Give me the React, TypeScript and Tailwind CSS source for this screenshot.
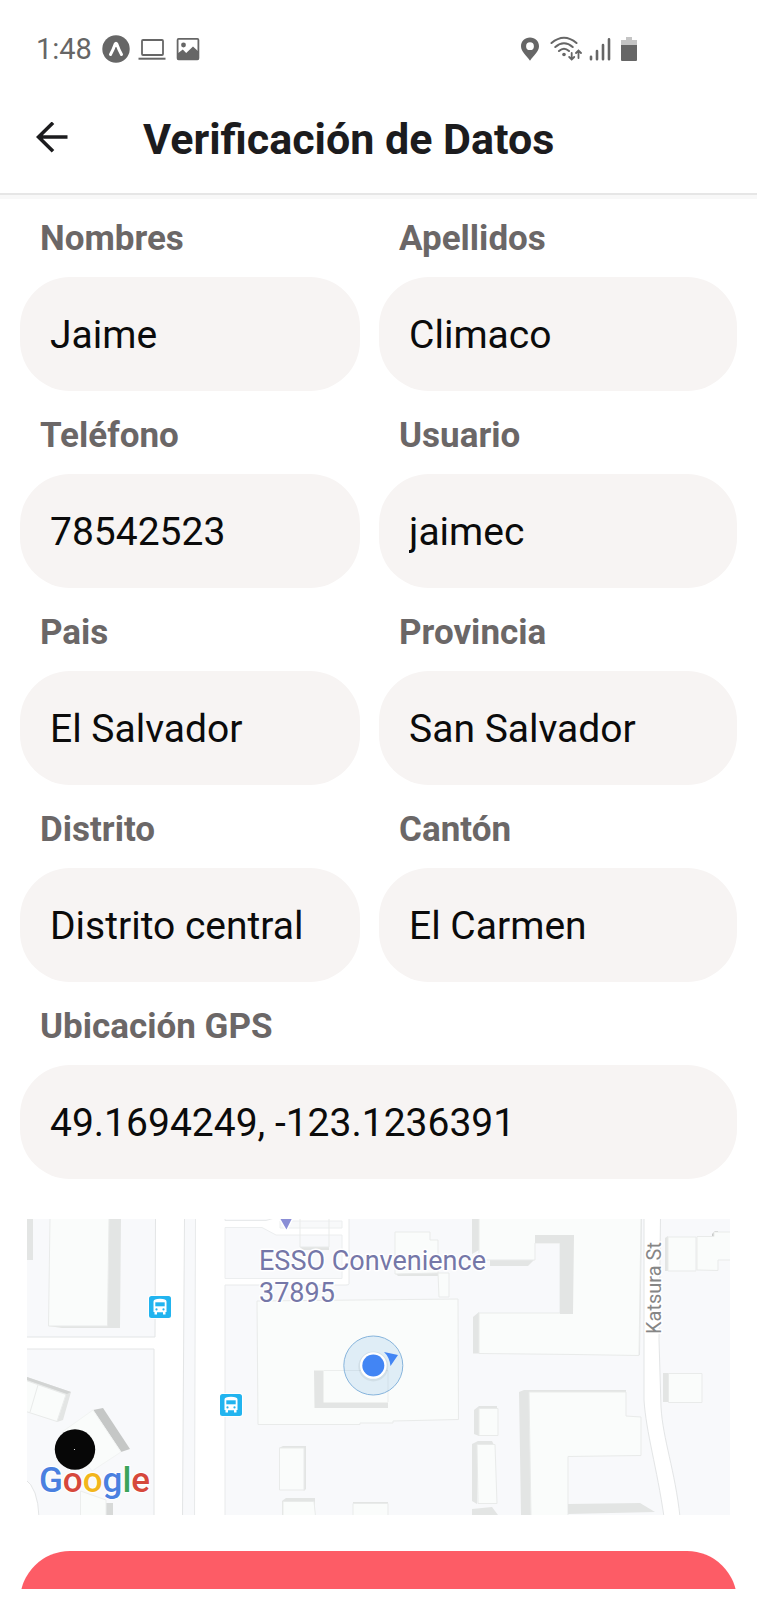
import React from "react";

type FieldProps = {
  id: string;
  label: string;
  value: string;
  wide?: boolean;
};

function Field({ id, label, value, wide }: FieldProps) {
  return (
    <div className={wide ? "col-span-2 min-w-0" : "min-w-0"}>
      <label htmlFor={id} className="mb-4 block pl-5 text-[35px] leading-[44px] font-bold text-[#6b6767]">
        {label}
      </label>
      <input
        id={id}
        type="text"
        defaultValue={value}
        className="block h-[114px] w-full rounded-[50px] bg-[#f7f4f3] px-[30px] pt-0.5 text-[39px] text-[#0b0b0b] outline-none"
      />
    </div>
  );
}

function StatusBar() {
  return (
    <div className="flex h-24 items-center justify-between pt-0.5 pr-[120px] pl-9 text-[#666666]">
      <div className="flex items-center">
        <span className="mr-2.5 text-[29px] leading-9">1:48</span>
        <svg className="mr-2" width="28" height="28" viewBox="0 0 28 28" aria-hidden="true">
          <circle cx="14" cy="14" r="13.7" fill="currentColor" />
          <path d="M8.5 19.5 Q11.5 14 13.2 9 Q14 7.4 14.8 9 Q16.5 14 19.5 19.5" fill="none" stroke="#fff" strokeWidth="3" strokeLinecap="round" strokeLinejoin="round" />
        </svg>
        <svg className="mr-2.5" width="28" height="28" viewBox="0 0 28 28" fill="none" stroke="currentColor" aria-hidden="true">
          <rect x="4" y="5" width="21" height="15" rx="1" strokeWidth="1.8" />
          <path d="M0.5 23.7 H27.5" strokeWidth="2" />
        </svg>
        <svg width="24" height="24" viewBox="0 0 24 24" aria-hidden="true">
          <rect x="1.6" y="1.9" width="20.8" height="20.4" rx="1" fill="none" stroke="currentColor" strokeWidth="1.8" />
          <circle cx="7.5" cy="8" r="2.4" fill="currentColor" />
          <path d="M1.6 16.5 L6.8 12.5 L10.2 16 L17 9.5 L22.4 14.5 V22.5 H1.6 Z" fill="currentColor" />
        </svg>
      </div>
      <div className="flex items-center">
        <svg className="mr-2.5" width="20" height="24" viewBox="0 0 20 24" aria-hidden="true">
          <path fillRule="evenodd" d="M10 0.5 C15.2 0.5 19 4.4 19 9.3 C19 14.5 13.6 18.6 10 23.8 C6.4 18.6 1 14.5 1 9.3 C1 4.4 4.8 0.5 10 0.5 Z M10 5.3 A3.9 3.9 0 1 0 10 13.1 A3.9 3.9 0 1 0 10 5.3 Z" fill="currentColor" />
        </svg>
        <svg className="mr-[7px]" width="32" height="26" viewBox="0 0 32 26" fill="none" stroke="currentColor" strokeLinecap="round" aria-hidden="true">
          <g strokeWidth="2.1">
            <path d="M1.5 7 Q14 -3.5 26.5 7" />
            <path d="M5.3 11 Q14 3.5 22.7 11" />
            <path d="M9 15 Q14 10.5 19 15" />
          </g>
          <circle cx="14" cy="18.5" r="1.8" fill="currentColor" stroke="none" />
          <path d="M21.7 17 V23 M19.2 21 L21.7 23.5 L24.2 21 M28.5 22 V15.500 M26 17 L28.5 14.500 L31 17" strokeWidth="1.8" />
        </svg>
        <svg className="mr-2.5" width="22" height="24" viewBox="0 0 22 24" fill="none" stroke="currentColor" strokeWidth="2.6" strokeLinecap="round" aria-hidden="true">
          <path d="M2 19.8 V22.2 M8 14 V22.2 M14 8 V22.2 M20 2.4 V22.2" />
        </svg>
        <svg width="16" height="24" viewBox="0 0 16 24" aria-hidden="true">
          <path d="M5 0 H11 V3 H16 V8.5 H0 V3 H5 Z" fill="#c4c4c4" />
          <path d="M0 8 H16 V23 Q16 24 15 24 H1 Q0 24 0 23 Z" fill="currentColor" />
        </svg>
      </div>
    </div>
  );
}

function BusStop({ x, y }: { x: number; y: number }) {
  return (
    <g transform={`translate(${x} ${y})`}>
      <rect x="-1" y="-1" width="24" height="24" rx="3.5" fill="#fff" />
      <rect width="22" height="22" rx="2.5" fill="#22b4ef" />
      <path d="M4.5 5.5 Q4.5 2.8 11 2.8 Q17.5 2.8 17.5 5.5 V16 H16.5 V18.5 H14 V16.2 H8 V18.5 H5.5 V16 H4.5 Z" fill="#fff" />
      <rect x="6.3" y="6.3" width="9.4" height="4" fill="#22b4ef" />
      <circle cx="7.5" cy="13.4" r="1.1" fill="#22b4ef" />
      <circle cx="14.5" cy="13.4" r="1.1" fill="#22b4ef" />
    </g>
  );
}

function LocationMap() {
  return (
    <svg className="block h-auto w-full" viewBox="27 19 703 296" role="img" aria-label="Mapa de ubicación">
      <rect x="27" y="19" width="703" height="296" fill="#f8f9fb" />

      {/* Streets */}
      <g fill="#ffffff" stroke="#e3e5e6" strokeWidth="1">
        <path d="M155.5 17 H184.5 L182.5 317 H154 V149 H25 V137 H155 Z" />
        <path d="M195.5 17 H225 V20.5 H266 L278 17 H349 V84 Q349 85 346 85 H225 V317 H194.5 Z" stroke="#e8eaeb" />
        <path d="M641.5 17 L639.5 155" fill="none" />
        <path d="M644 17 V200 C646 232 657 268 664 317 H680 C675 270 663 240 661 207 L659 140 L660.5 17 Z" />
        <path d="M25 279 Q38 288 39 317 H25 Z" />
      </g>
      <path d="M225 27.5 H262 L276 35 H342 V78.5 H225 Z" fill="#f8f9fb" stroke="#eceeef" />
      <path d="M280 21 H342 V28 H280 Z" fill="#f8f9fa" stroke="#eceeef" />

      {/* Building shadows */}
      <g fill="#e3e5e4">
        <path d="M27 19 H33 V60 H27 Z" />
        <path d="M109 19 H121 L120 128 H62 L48 126 H107 Z" />
        <path d="M27 177 L71 192 L63 220 L57 222 L66 195 L27 181 Z" />
        <path d="M27 177 L71 192 L67 194 L27 180 Z" fill="#d2d4d3" />
        <path d="M93 210 L103 208 L130 249 L121 252 Z" fill="#c5c7c6" />
        <path d="M106 303 H113 V315 H106 Z" fill="#d7d9d8" />
        <path d="M300 47 H329 V50 H303 Z" />
        <path d="M395 73 H438 V76 H398 Z" />
        <path d="M472 19 H479 V50 L472 54 Z" />
        <path d="M490 60 H534 L528 66 H490 Z" />
        <path d="M473 117 L479 112 V153.5 H473 Z" />
        <path d="M519 192 L524 190 H626 V193 H529 L531 315 H521 Z" />
        <path d="M474 210 L479 206 H497 V209 H479 V236 L474 234 Z" />
        <path d="M472 244 L478 241 H492 L494 245 H477 V304 L472 301 Z" />
        <path d="M472 309 L492 307 L498 315 H472 Z" />
        <path d="M279 248 L283 246 H306 V289 L304 291 Z" />
        <path d="M282 301 L286 298 H315 V315 H282 Z" />
        <path d="M353 302 H388 V305 H353 Z" />
        <path d="M665 38 L668 36 V71 H665 Z" />
        <path d="M712 34 L715 31 H718 V36 H712 Z" fill="#c9cbca" />
        <path d="M663 173 H669 V202 H663 Z" />
      </g>

      {/* Buildings */}
      <g fill="#fafcfb" stroke="#e9ebea" strokeWidth="1">
        <path d="M50 18 H109 L107.5 126 H48.5 Z" />
        <path d="M26 180.5 L66 194.5 L57 221.5 L26 211.5 M38 185 L30 212" />
        <path d="M93 210 L121 252 L92 271 L62 232 Z" stroke="#f2f4f3" />
        <path d="M80.5 316 V291 L106 300 V316" stroke="#eceeed" />
        <path d="M300 18 H329 V47 H300 Z" fill="none" />
        <path d="M257 101 L458 99 L458.5 219.5 L393 221 V223 H360 V224.5 H258 Z" />
        <path d="M395 74 V32 H430 V40 H438 V73 Z M438 73 H449 V97 H439 Z" />
        <path d="M479 18 H641 L639 155.5 L575 154.5 L479 153.5 V113 H560 V43 H535 V60 H479 Z" />
        <path d="M529 192 H626 V216 L641 217 V255.5 L568 256.5 V316 H531 Z" />
        <path d="M479 208.5 H498 V235.5 H479 Z M477 244.5 H495 L497 303.5 H478 Z" />
        <path d="M279.5 248 H304 V290 H279.5 Z M283 316 V301.5 H314 L315.5 316 M353 316 V303.5 H388 V316" />
        <path d="M668 37 H696 V71 H668 Z M697 70 V36.5 H714 V32 H731 V60 H718 V70.5 Z" />
        <path d="M668.5 173.5 H702 V202.5 H668.5 Z" />
      </g>
      <path d="M535 35 H574 L573 114 H560 V43 H535 Z" fill="#e3e5e4" />
      <path d="M568 304 L640 303 L655 312 L568 314 Z" fill="#e3e5e4" />
      <path d="M314 170.5 H323.5 V202.5 H388 V208 H314.5 Z" fill="#e3e5e4" />
      <path d="M323.5 170.5 H388 V202" fill="none" stroke="#eceeed" />

      {/* Places */}
      <path d="M279 18 L293 18 L286.5 31 Z" fill="#8a8ed6" stroke="#fff" strokeWidth="1.5" />
      <BusStop x={149} y={96} />
      <BusStop x={220} y={194} />
      <g fontFamily="Roboto, sans-serif" stroke="#fff" strokeWidth="3" strokeLinejoin="round" paintOrder="stroke">
        <text x="259" y="70" fontSize="27" fill="#7577a8">ESSO Convenience</text>
        <text x="259" y="102" fontSize="27" fill="#7577a8">37895</text>
        <text transform="translate(661 134) rotate(-90)" fontSize="20" fill="#868686">Katsura St</text>
      </g>

      {/* Current position */}
      <circle cx="373.3" cy="165.5" r="29.5" fill="#4a98e0" fillOpacity="0.15" stroke="#86b4dc" />
      <circle cx="373.3" cy="166.5" r="15" fill="#000" fillOpacity="0.06" />
      <circle cx="373.3" cy="165.5" r="13.3" fill="#fff" />
      <circle cx="373.3" cy="165.5" r="11" fill="#4285f4" />
      <path d="M384 152 L398 155 L390.5 166 Q389.5 157 384 152 Z" fill="#4285f4" />

      <circle cx="75" cy="249.5" r="20.2" fill="#070707" />
      <circle cx="74.5" cy="249.5" r="0.6" fill="#fff" />
      <text x="39" y="292" fontFamily="Roboto, sans-serif" fontSize="35" fontWeight="500" stroke="#fff" strokeWidth="2" paintOrder="stroke">
        <tspan fill="#4a80e0">G</tspan>
        <tspan fill="#d6483c">o</tspan>
        <tspan fill="#f2b61c">o</tspan>
        <tspan fill="#4a80e0">g</tspan>
        <tspan fill="#3ba45a">l</tspan>
        <tspan fill="#d6483c">e</tspan>
      </text>
    </svg>
  );
}

export default function App() {
  return (
    <div className="flex h-screen flex-col bg-white pb-[11px] font-[Roboto,sans-serif]">
      <StatusBar />
      <header className="relative z-10 flex h-[99px] shrink-0 items-center border-b-2 border-[#e6e6e6] bg-white pb-3.5 pl-9 shadow-[0_4px_0_#f8f8f8]">
        <button type="button" aria-label="Volver" className="mr-[75px] text-[#1c1c1e]">
          <svg className="block" width="32" height="32" viewBox="0 0 32 32" fill="none" stroke="currentColor" strokeWidth="3.6" aria-hidden="true">
            <path d="M31.5 15 H3 M17 0.800 L2.5 15 L17 29.200" />
          </svg>
        </button>
        <h1 className="pt-0.5 text-[43px] leading-[52px] font-bold text-[#1c1c1e]">Verificación de Datos</h1>
      </header>
      <main className="min-h-0 flex-1 overflow-y-auto px-5 pt-[22px] [scrollbar-width:none]">
        <form>
          <div className="grid grid-cols-[19fr_20fr] gap-x-[19px] gap-y-[23px]">
            <Field id="nombres" label="Nombres" value="Jaime" />
            <Field id="apellidos" label="Apellidos" value="Climaco" />
            <Field id="telefono" label="Teléfono" value="78542523" />
            <Field id="usuario" label="Usuario" value="jaimec" />
            <Field id="pais" label="Pais" value="El Salvador" />
            <Field id="provincia" label="Provincia" value="San Salvador" />
            <Field id="distrito" label="Distrito" value="Distrito central" />
            <Field id="canton" label="Cantón" value="El Carmen" />
            <Field id="gps" label="Ubicación GPS" value="49.1694249, -123.1236391" wide />
          </div>
          <div className="mx-[7px] mt-10">
            <LocationMap />
          </div>
          <button type="button" aria-label="Continuar" className="mt-9 block h-[114px] w-full rounded-[50px] bg-[#fd5c66]" />
        </form>
      </main>
    </div>
  );
}
